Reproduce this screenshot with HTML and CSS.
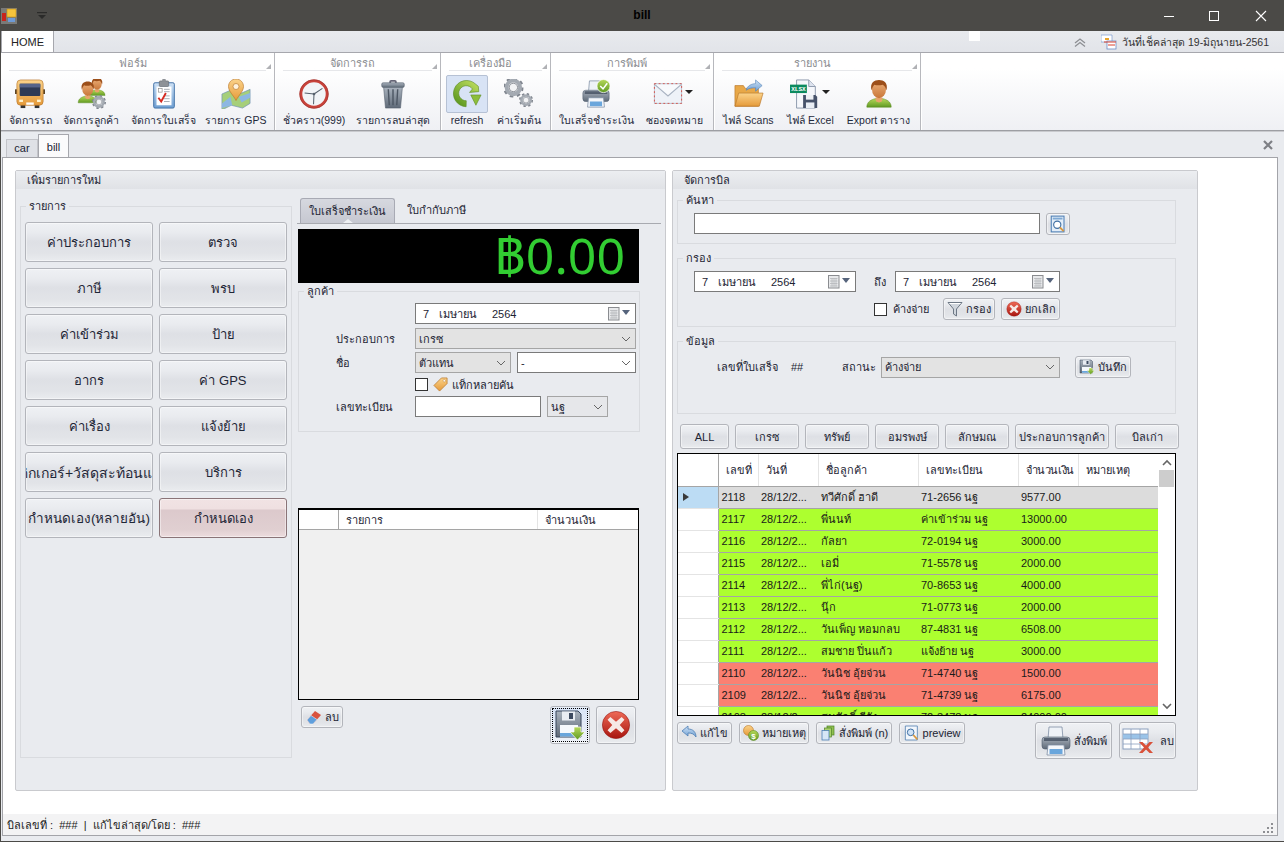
FILE: index.html
```html
<!DOCTYPE html>
<html lang="th">
<head>
<meta charset="utf-8">
<title>bill</title>
<link rel="stylesheet" href="styles.css">
</head>
<body>
<svg class="defs" aria-hidden="true">
<defs>
<linearGradient id="gOrange" x1="0" y1="0" x2="0" y2="1"><stop offset="0" stop-color="#fbd38a"/><stop offset="1" stop-color="#e59a3a"/></linearGradient>
<linearGradient id="gGreen" x1="0" y1="0" x2="0" y2="1"><stop offset="0" stop-color="#b6d85a"/><stop offset="1" stop-color="#5f9a22"/></linearGradient>
<linearGradient id="gGray" x1="0" y1="0" x2="0" y2="1"><stop offset="0" stop-color="#a9b2bd"/><stop offset="1" stop-color="#5f6a78"/></linearGradient>
<linearGradient id="gRed" x1="0" y1="0" x2="0" y2="1"><stop offset="0" stop-color="#ee6a57"/><stop offset="1" stop-color="#a8150f"/></linearGradient>
<linearGradient id="gBlue" x1="0" y1="0" x2="0" y2="1"><stop offset="0" stop-color="#cfe2f6"/><stop offset="1" stop-color="#6f9fd2"/></linearGradient>
<linearGradient id="gSkin" x1="0" y1="0" x2="0" y2="1"><stop offset="0" stop-color="#eeb27c"/><stop offset="1" stop-color="#c9773a"/></linearGradient>
</defs>
<symbol id="i-person" viewBox="0 0 32 32">
  <path d="M3 30c0-6 5-8 9-9h8c4 1 9 3 9 9z" fill="url(#gGreen)" stroke="#5b8a22" stroke-width=".6"/>
  <path d="M12 20h8l-1 4-3 1-3-1z" fill="#e7a56b"/>
  <ellipse cx="16" cy="11" rx="7.500" ry="9.500" fill="url(#gSkin)"/>
  <path d="M8 12C6 4 11 1 16 1s10 3 8 11c-1-3-2-5-4-6-3 1-7 1-9 0-1 1-2 3-3 6z" fill="#9c4f1a"/>
</symbol>
<symbol id="i-gear" viewBox="0 0 32 32">
  <circle cx="16" cy="16" r="13" fill="none" stroke="#80868f" stroke-width="6" stroke-dasharray="5 5.210"/>
  <circle cx="16" cy="16" r="10.500" fill="none" stroke="#a4aab2" stroke-width="6"/>
  <circle cx="16" cy="16" r="6.500" fill="#f2f3f5" stroke="#6f757e" stroke-width="1.200"/>
</symbol>
<symbol id="i-printer" viewBox="0 0 32 32">
  <path d="M9 2h13l1 12H8z" fill="#eef2f7" stroke="#7d8da3" stroke-width=".8"/>
  <rect x="2" y="12" width="28" height="12" rx="3" fill="url(#gGray)" stroke="#4d5b6d" stroke-width=".6"/>
  <rect x="4" y="13" width="24" height="3" fill="#3f4b5c" opacity=".75"/>
  <path d="M8 20h16l1 10H7z" fill="#f4f7fb" stroke="#7d8da3" stroke-width=".8"/>
  <rect x="9.500" y="24" width="13" height="5" fill="#6aa6dc"/>
</symbol>
<symbol id="i-save" viewBox="0 0 32 32">
  <path d="M2 2h22l3 3v23H2z" fill="url(#gGray)" stroke="#36445a" stroke-width="1"/>
  <rect x="8" y="2.500" width="13" height="9" fill="#e9edf3"/>
  <rect x="15" y="4" width="4" height="6" fill="#3d4a60"/>
  <rect x="6" y="16" width="18" height="11.500" fill="#f5f8fc"/>
  <rect x="6" y="24" width="18" height="3.500" fill="#6aa6dc"/>
  <path d="M20 18h7v5h4l-7.500 8L16 23h4z" fill="url(#gGreen)" stroke="#fff" stroke-width=".7"/>
</symbol>
<symbol id="i-cancel" viewBox="0 0 32 32">
  <circle cx="16" cy="16" r="14.500" fill="url(#gRed)" stroke="#93100c" stroke-width=".6"/>
  <path d="M10 7.500l6 5 6-5 3 3-5 5.500 5 5.500-3 3-6-5-6 5-3-3 5-5.500-5-5.500z" fill="#f6e9e6"/>
</symbol>
<symbol id="i-search" viewBox="0 0 24 24">
  <rect x="3" y="1.500" width="17" height="21" fill="#e2edf8" stroke="#4d7fb5" stroke-width="1.400"/>
  <rect x="5" y="3.500" width="13" height="2.500" fill="#7fa9d4"/>
  <circle cx="11" cy="13" r="4.800" fill="#fff" stroke="#3f6fa3" stroke-width="1.500"/>
  <path d="M14.500 16.500l5 5" stroke="#d9973d" stroke-width="2.600"/>
</symbol>
<symbol id="i-cal" viewBox="0 0 12 14">
  <rect x=".5" y=".5" width="10.500" height="12.500" fill="#e8e9eb" stroke="#8a8c90"/>
  <path d="M2 3.500h7.500M2 6h7.500M2 8.500h7.500M2 11h7.500M4 3v8.500M6 3v8.500M8 3v8.500" stroke="#b5b7bb" stroke-width=".8"/>
</symbol>
<symbol id="i-preview" viewBox="0 0 24 24">
  <path d="M2 1.500h18v21H2z" fill="#f2f6fb" stroke="#5c86b5" stroke-width="1.300"/>
  <circle cx="10" cy="11" r="5" fill="#cfe2f6" stroke="#3f6fa3" stroke-width="1.500"/>
  <path d="M14 15l6 6.500" stroke="#d9973d" stroke-width="2.600"/>
</symbol>
</svg>

<div class="window">
  <header class="titlebar">
    <svg class="appicon" viewBox="0 0 16 16"><rect x="0" y="0" width="16" height="16" fill="#7a7a78"/><rect x="6" y="1" width="9" height="8" fill="#f5c33b" stroke="#c48f14" stroke-width=".6"/><rect x="1" y="5" width="4" height="8" fill="#c8231c"/><rect x="7" y="10" width="7" height="4" fill="#6d9ad6"/></svg>
    <svg class="qat" viewBox="0 0 10 7"><rect x="0" y="0" width="10" height="1.200" fill="#2b2b2a"/><path d="M1 3h8L5 7z" fill="#2b2b2a"/></svg>
    <div class="title-text">bill</div>
    <div class="winbtns">
      <svg viewBox="0 0 12 12"><path d="M1 6.500h10" stroke="#fff" stroke-width="1"/></svg>
      <svg viewBox="0 0 12 12"><rect x="1.500" y="1.500" width="9" height="9" fill="none" stroke="#fff"/></svg>
      <svg viewBox="0 0 12 12"><path d="M1 1l10 10M11 1L1 11" stroke="#fff" stroke-width="1.100"/></svg>
    </div>
  </header>

  <div class="rtabs">
    <div class="rtab">HOME</div>
    <div class="speck"></div>
    <div class="rtabs-right">
      <svg class="chev" viewBox="0 0 14 10"><path d="M2 6l5-4 5 4M2 9.500l5-4 5 4" fill="none" stroke="#8d8f93" stroke-width="1.300"/></svg>
      <svg class="chkicon" viewBox="0 0 16 16"><path d="M0 1h11v7H0z" fill="#fff" stroke="#7d9bcf" stroke-width=".7"/><rect x="4" y="4" width="4" height="2" fill="#e9a52c"/><rect x="6" y="7" width="9" height="8" fill="#fff" stroke="#6d8cc5" stroke-width=".8"/><path d="M3 8h12M7 11h7" stroke="#d9402f" stroke-width="1"/></svg>
      <span>วันที่เช็คล่าสุด 19-มิถุนายน-2561</span>
    </div>
  </div>

  <nav class="ribbon">
    <section class="rgroup g1">
      <div class="rg-title">ฟอร์ม</div>
      <div class="rg-items">
        <div class="ritem w56"><div class="ricon"><svg viewBox="0 0 32 32"><rect x="0" y="11" width="2.500" height="5" fill="#5a4526"/><rect x="29.500" y="11" width="2.500" height="5" fill="#5a4526"/><rect x="6" y="27" width="5" height="4" fill="#333"/><rect x="21" y="27" width="5" height="4" fill="#333"/><rect x="2" y="1" width="28" height="27" rx="4" fill="url(#gOrange)" stroke="#b9772a" stroke-width=".7"/><rect x="5" y="5" width="22" height="13" rx="1" fill="#2d3a55"/><rect x="5" y="5" width="22" height="4" fill="#55648a"/><rect x="4.500" y="22" width="4" height="2.500" fill="#fff4d0"/><rect x="23.500" y="22" width="4" height="2.500" fill="#fff4d0"/><rect x="12" y="25" width="8" height="2.500" fill="#fff"/></svg></div><span>จัดการรถ</span></div>
        <div class="ritem w66"><div class="ricon"><svg viewBox="0 0 32 32"><g transform="translate(12 -2)"><svg width="21" height="21" viewBox="0 0 32 32"><use href="#i-person"/></svg></g><g transform="translate(0 2)"><svg width="25" height="25" viewBox="0 0 32 32"><use href="#i-person"/></svg></g><g transform="translate(17 17)"><svg width="15" height="15" viewBox="0 0 32 32"><use href="#i-gear"/></svg></g></svg></div><span>จัดการลูกค้า</span></div>
        <div class="ritem w79"><div class="ricon"><svg viewBox="0 0 32 32"><rect x="5" y="4" width="22" height="27" rx="1.500" fill="url(#gBlue)" stroke="#3d6ea5"/><rect x="8" y="8" width="16" height="20" fill="#fff"/><rect x="11" y="2" width="10" height="6" rx="1" fill="#8e9297" stroke="#5d6065" stroke-width=".6"/><rect x="14" y="0" width="4" height="3" rx="1" fill="#8e9297"/><rect x="10" y="10" width="4" height="4" fill="none" stroke="#8a8a8a" stroke-width=".7"/><path d="M16 11h6M16 13.500h6M16 18h6M16 21h6M16 24h6" stroke="#9aa0a8" stroke-width=".9"/><path d="M10 20l3 4 5-9" fill="none" stroke="#d62a20" stroke-width="2"/></svg></div><span>จัดการใบเสร็จ</span></div>
        <div class="ritem w66"><div class="ricon"><svg viewBox="0 0 32 32"><path d="M1 16l9-4 12 3 9-4v15l-8 5-12-3-10 5z" fill="#a6cf7a" stroke="#6f8fb5" stroke-width=".7"/><path d="M1 26l9-7 2 9-11 3zM19 19l12-4v5l-9 5z" fill="#8db7e2"/><path d="M16 0c-5 0-8 4-8 8 0 5 5 9 8 15 3-6 8-10 8-15 0-4-3-8-8-8z" fill="url(#gOrange)" stroke="#b9772a" stroke-width=".7"/><circle cx="16" cy="8" r="3.200" fill="#fff3dd" stroke="#b9772a" stroke-width=".7"/></svg></div><span>รายการ GPS</span></div>
      </div>
    </section>
    <section class="rgroup g2">
      <div class="rg-title">จัดการรถ</div>
      <div class="rg-items">
        <div class="ritem w76"><div class="ricon"><svg viewBox="0 0 32 32"><circle cx="16" cy="16" r="14" fill="#f2f4f7" stroke="#c8423a" stroke-width="3"/><circle cx="16" cy="16" r="15.300" fill="none" stroke="#96302c" stroke-width=".6"/><path d="M16 16l9-6M16 16l-.5 11M16 16l-10-1" stroke="#56606c" stroke-width="1.100" fill="none"/><circle cx="16" cy="16" r="1.400" fill="#56606c"/></svg></div><span>ชั่วคราว(999)</span></div>
        <div class="ritem w82"><div class="ricon"><svg viewBox="0 0 32 32"><path d="M12 3q0-2 2-2h4q2 0 2 2v2h-2V3h-4v2h-2z" fill="#667"/><rect x="4" y="4" width="24" height="5" rx="1.500" fill="url(#gGray)" stroke="#515b69" stroke-width=".6"/><path d="M6 9h20l-2 22H8z" fill="url(#gGray)" stroke="#515b69" stroke-width=".6"/><path d="M11 11l1 17M16 11v17M21 11l-1 17" stroke="#4c5663" stroke-width="1.500"/></svg></div><span>รายการลบล่าสุด</span></div>
      </div>
    </section>
    <section class="rgroup g3">
      <div class="rg-title">เครื่องมือ</div>
      <div class="rg-items">
        <div class="ritem w50 active"><div class="ricon"><svg viewBox="0 0 32 32"><path d="M16 2a14 14 0 1 0 8 25l-4-5a8 8 0 1 1-3-13.800V13l7-7-4-4z" fill="url(#gGreen)" stroke="#5b8a22" stroke-width=".6" transform="rotate(40 16 16)"/><path d="M20 17h11l-5.500 11z" fill="#8cbe3c" stroke="#5b8a22" stroke-width=".6"/></svg></div><span>refresh</span></div>
        <div class="ritem w54"><div class="ricon"><svg viewBox="0 0 32 32"><g transform="translate(-1 -2)"><svg width="22" height="22" viewBox="0 0 32 32"><use href="#i-gear"/></svg></g><g transform="translate(16 15)"><svg width="15" height="15" viewBox="0 0 32 32"><use href="#i-gear"/></svg></g></svg></div><span>ค่าเริ่มต้น</span></div>
      </div>
    </section>
    <section class="rgroup g4">
      <div class="rg-title">การพิมพ์</div>
      <div class="rg-items">
        <div class="ritem w88"><div class="ricon"><svg viewBox="0 0 32 32"><use href="#i-printer"/><circle cx="24" cy="7.500" r="7" fill="url(#gGreen)" stroke="#fff" stroke-width=".8"/><path d="M20.500 7.500l3 3 4.500-6" fill="none" stroke="#fff" stroke-width="1.600"/></svg></div><span>ใบเสร็จชำระเงิน</span></div>
        <div class="ritem w68"><div class="ricon withcaret"><svg viewBox="0 0 32 32"><rect x="1.500" y="5" width="29" height="21" fill="#eef2f8" stroke="#b9c2d0"/><rect x="1.500" y="5" width="29" height="21" fill="none" stroke="#d8453b" stroke-width=".9" stroke-dasharray="2 2.500"/><path d="M2 6l14 12L30 6z" fill="#f8fafd"/><path d="M2 6l14 12L30 6" fill="none" stroke="#a9b3c2" stroke-width="1.300"/></svg><i class="caret"></i></div><span>ซองจดหมาย</span></div>
      </div>
    </section>
    <section class="rgroup g5">
      <div class="rg-title">รายงาน</div>
      <div class="rg-items">
        <div class="ritem w67"><div class="ricon"><svg viewBox="0 0 32 32"><path d="M1 7h9l2 3h14v19H1z" fill="#e8a848" stroke="#b9772a" stroke-width=".7"/><path d="M5 15h26l-4 14H1z" fill="url(#gOrange)" stroke="#b9772a" stroke-width=".7"/><path d="M13 12c1-5 6-7 10-7V1l7 6-7 6V9c-4 0-7 1-10 3z" fill="url(#gBlue)" stroke="#4d7fb5" stroke-width=".6"/></svg></div><span>ไฟล์ Scans</span></div>
        <div class="ritem w57"><div class="ricon withcaret"><svg viewBox="0 0 32 32"><path d="M7 1h13l7 7v23H7z" fill="#f5f7fb" stroke="#8b97ab"/><path d="M20 1v7h7" fill="#dde3ee" stroke="#8b97ab"/><rect x="0" y="6" width="18" height="9" fill="#0b8a5f"/><text x="9" y="13.200" class="xl">XLSX</text><path d="M14 17h13l2 2v12H14z" fill="#46526a"/><rect x="17" y="17" width="8" height="5" fill="#eef1f5"/><rect x="17" y="25" width="9" height="6" fill="#e9eef5"/></svg><i class="caret"></i></div><span>ไฟล์ Excel</span></div>
        <div class="ritem w79"><div class="ricon"><svg viewBox="0 0 32 32"><use href="#i-person"/></svg></div><span>Export ตาราง</span></div>
      </div>
    </section>
  </nav>

  <div class="doctabs">
    <div class="dtab">car</div>
    <div class="dtab on">bill</div>
    <svg class="dclose" viewBox="0 0 10 10"><path d="M1 1l8 8M9 1L1 9" stroke="#7d7f84" stroke-width="2.200"/></svg>
  </div>

  <main class="doc">
    <div class="workspace">
      <section class="panel pleft">
        <div class="phead"><span>เพิ่มรายการใหม่</span></div>
        <div class="lbody">
          <div class="group items">
            <div class="gtitle">รายการ</div>
            <div class="bigbtns">
              <button class="btn big">ค่าประกอบการ</button>
              <button class="btn big">ตรวจ</button>
              <button class="btn big">ภาษี</button>
              <button class="btn big">พรบ</button>
              <button class="btn big">ค่าเข้าร่วม</button>
              <button class="btn big">ป้าย</button>
              <button class="btn big">อากร</button>
              <button class="btn big">ค่า GPS</button>
              <button class="btn big">ค่าเรื่อง</button>
              <button class="btn big">แจ้งย้าย</button>
              <button class="btn big clip"><span>สติกเกอร์+วัสดุสะท้อนแสง</span></button>
              <button class="btn big">บริการ</button>
              <button class="btn big wider">กำหนดเอง(หลายอัน)</button>
              <button class="btn big pink">กำหนดเอง</button>
            </div>
          </div>
          <div class="midcol">
            <div class="ptabs">
              <div class="ptab on">ใบเสร็จชำระเงิน</div>
              <div class="ptab">ใบกำกับภาษี</div>
            </div>
            <div class="display">฿0.00</div>
            <div class="group cust">
              <div class="gtitle">ลูกค้า</div>
              <div class="form">
                <div class="frow r21"><label></label>
                  <div class="field date wide"><span class="d">7</span><span class="m">เมษายน</span><span class="y">2564</span><svg class="cal"><use href="#i-cal"/></svg><i class="tri"></i></div>
                </div>
                <div class="frow r21"><label>ประกอบการ</label>
                  <div class="field combo wide"><span>เกรซ</span><svg class="chv" viewBox="0 0 10 6"><path d="M1 1l4 4 4-4" fill="none" stroke="#666"/></svg></div>
                </div>
                <div class="frow r21"><label>ชื่อ</label>
                  <div class="field combo w96"><span>ตัวแทน</span><svg class="chv" viewBox="0 0 10 6"><path d="M1 1l4 4 4-4" fill="none" stroke="#666"/></svg></div>
                  <div class="field white w119 ml6"><span>-</span><svg class="chv" viewBox="0 0 10 6"><path d="M1 1l4 4 4-4" fill="none" stroke="#666"/></svg></div>
                </div>
                <div class="frow r17"><label></label>
                  <i class="check"></i>
                  <svg class="tag" viewBox="0 0 16 16"><path d="M1 9l8-8h6v6l-8 8z" fill="url(#gOrange)" stroke="#b9772a" stroke-width=".8"/><circle cx="12" cy="4" r="1.300" fill="#fff" stroke="#b9772a" stroke-width=".5"/></svg>
                  <span class="chk-lab">แท็กหลายคัน</span>
                </div>
                <div class="frow r21"><label>เลขทะเบียน</label>
                  <div class="field white w126"></div>
                  <div class="field combo light w61 ml6"><span>นฐ</span><svg class="chv" viewBox="0 0 10 6"><path d="M1 1l4 4 4-4" fill="none" stroke="#666"/></svg></div>
                </div>
              </div>
            </div>
            <div class="ltable">
              <div class="lt-head"><span class="c1"></span><span class="c2">รายการ</span><span class="c3">จำนวนเงิน</span></div>
            </div>
            <div class="lactions">
              <button class="btn small"><svg class="s16" viewBox="0 0 16 16"><path d="M1 11l8-9 6 4-8 9H4z" fill="#d9533f"/><path d="M1 11l4-4.500 6 4L7 15H4z" fill="#5f9fdc" stroke="#fff" stroke-width=".5"/></svg>ลบ</button>
              <span class="spacer"></span>
              <button class="btn act focus"><svg class="s32" viewBox="0 0 32 32"><use href="#i-save"/></svg></button>
              <button class="btn act"><svg class="s30" viewBox="0 0 32 32"><use href="#i-cancel"/></svg></button>
            </div>
          </div>
        </div>
      </section>

      <section class="panel pright">
        <div class="phead"><span>จัดการบิล</span></div>
        <div class="rbody">
          <div class="group g-search">
            <div class="gtitle">ค้นหา</div>
            <div class="srow">
              <div class="field white w346"></div>
              <button class="btn ico"><svg class="s18" viewBox="0 0 24 24"><use href="#i-search"/></svg></button>
            </div>
          </div>
          <div class="group g-filter">
            <div class="gtitle">กรอง</div>
            <div class="frow2">
              <div class="field date w162"><span class="d">7</span><span class="m">เมษายน</span><span class="y">2564</span><svg class="cal"><use href="#i-cal"/></svg><i class="tri"></i></div>
              <span class="to">ถึง</span>
              <div class="field date w165"><span class="d">7</span><span class="m">เมษายน</span><span class="y">2564</span><svg class="cal"><use href="#i-cal"/></svg><i class="tri"></i></div>
            </div>
            <div class="frow3">
              <i class="check"></i><span class="owed">ค้างจ่าย</span>
              <button class="btn small b-filter"><svg class="s16" viewBox="0 0 16 16"><path d="M1 1.500h14L9.500 8v7l-3-2V8z" fill="#cfd5dc" stroke="#6d7885"/><path d="M2.500 2.500h11" stroke="#fff"/></svg>กรอง</button>
              <button class="btn small b-cancel"><svg class="s16" viewBox="0 0 32 32"><use href="#i-cancel"/></svg>ยกเลิก</button>
            </div>
          </div>
          <div class="group g-info">
            <div class="gtitle">ข้อมูล</div>
            <div class="irow">
              <span class="no">เลขที่ใบเสร็จ</span><span class="hash">##</span><span class="st">สถานะ</span>
              <div class="field combo w179"><span>ค้างจ่าย</span><svg class="chv" viewBox="0 0 10 6"><path d="M1 1l4 4 4-4" fill="none" stroke="#666"/></svg></div>
              <button class="btn small b-save"><svg class="s16" viewBox="0 0 32 32"><use href="#i-save"/></svg>บันทึก</button>
            </div>
          </div>
          <div class="fbtns">
            <button class="btn fb w49">ALL</button>
            <button class="btn fb">เกรซ</button>
            <button class="btn fb">ทรัพย์</button>
            <button class="btn fb">อมรพงษ์</button>
            <button class="btn fb">ลักษมณ</button>
            <button class="btn fb w94">ประกอบการลูกค้า</button>
            <button class="btn fb">บิลเก่า</button>
          </div>
          <div class="rtable">
            <div class="rt-wrap">
              <table>
                <colgroup><col class="k0"><col class="k1"><col class="k2"><col class="k3"><col class="k3"><col class="k2"><col class="k4"></colgroup>
                <thead><tr><th></th><th>เลขที่</th><th>วันที่</th><th>ชื่อลูกค้า</th><th>เลขทะเบียน</th><th class="tight">จำนวนเงิน</th><th>หมายเหตุ</th></tr></thead>
                <tbody>
                  <tr class="gray"><th class="sel"><i class="arrow"></i></th><td>2118</td><td>28/12/2...</td><td>ทวีศักดิ์ ฮาดี</td><td>71-2656 นฐ</td><td>9577.00</td><td></td></tr>
                  <tr class="green"><th></th><td>2117</td><td>28/12/2...</td><td>พี่นนท์</td><td>ค่าเข้าร่วม นฐ</td><td>13000.00</td><td></td></tr>
                  <tr class="green"><th></th><td>2116</td><td>28/12/2...</td><td>กัลยา</td><td>72-0194 นฐ</td><td>3000.00</td><td></td></tr>
                  <tr class="green"><th></th><td>2115</td><td>28/12/2...</td><td>เอมี่</td><td>71-5578 นฐ</td><td>2000.00</td><td></td></tr>
                  <tr class="green"><th></th><td>2114</td><td>28/12/2...</td><td>พี่ไก่(นฐ)</td><td>70-8653 นฐ</td><td>4000.00</td><td></td></tr>
                  <tr class="green"><th></th><td>2113</td><td>28/12/2...</td><td>นุ๊ก</td><td>71-0773 นฐ</td><td>2000.00</td><td></td></tr>
                  <tr class="green"><th></th><td>2112</td><td>28/12/2...</td><td>วันเพ็ญ หอมกลบ</td><td>87-4831 นฐ</td><td>6508.00</td><td></td></tr>
                  <tr class="green"><th></th><td>2111</td><td>28/12/2...</td><td>สมชาย ปิ่นแก้ว</td><td>แจ้งย้าย นฐ</td><td>3000.00</td><td></td></tr>
                  <tr class="red"><th></th><td>2110</td><td>28/12/2...</td><td>วันนิช อุ้ยจ่วน</td><td>71-4740 นฐ</td><td>1500.00</td><td></td></tr>
                  <tr class="red"><th></th><td>2109</td><td>28/12/2...</td><td>วันนิช อุ้ยจ่วน</td><td>71-4739 นฐ</td><td>6175.00</td><td></td></tr>
                  <tr class="green"><th></th><td>2108</td><td>28/12/2...</td><td>สมศักดิ์ ดีจัง</td><td>72-3478 นฐ</td><td>24000.00</td><td></td></tr>
                </tbody>
              </table>
            </div>
            <div class="vscroll">
              <svg viewBox="0 0 10 8"><path d="M1 6l4-4 4 4" fill="none" stroke="#666" stroke-width="1.600"/></svg>
              <div class="thumb"></div>
              <span class="spacer"></span>
              <svg viewBox="0 0 10 8"><path d="M1 2l4 4 4-4" fill="none" stroke="#666" stroke-width="1.600"/></svg>
            </div>
          </div>
          <div class="bactions">
            <button class="btn small w55"><svg class="s16" viewBox="0 0 16 16"><path d="M1 6l6-5v3c5 0 8 3 8 8-2-3-4-4-8-4v3z" fill="url(#gBlue)" stroke="#4d7fb5" stroke-width=".8"/></svg>แก้ไข</button>
            <button class="btn small w70b"><svg class="s16" viewBox="0 0 16 16"><circle cx="5.500" cy="5.500" r="5" fill="url(#gOrange)" stroke="#b9772a" stroke-width=".6"/><circle cx="10.500" cy="10.500" r="5" fill="url(#gGreen)" stroke="#5b8a22" stroke-width=".6"/><text x="10.500" y="13.500" class="cur">$</text></svg>หมายเหตุ</button>
            <button class="btn small w76b"><svg class="s16" viewBox="0 0 16 16"><rect x="7" y="1" width="7" height="9" fill="#8fc050" stroke="#4f8127" stroke-width=".7"/><rect x="4.500" y="3" width="7" height="9" fill="#a9d26a" stroke="#4f8127" stroke-width=".7"/><rect x="2" y="5.500" width="7" height="9.500" fill="#d6e7f7" stroke="#4d7fb5" stroke-width=".8"/></svg>สั่งพิมพ์ (n)</button>
            <button class="btn small w66b"><svg class="s16" viewBox="0 0 24 24"><use href="#i-preview"/></svg>preview</button>
            <span class="spacer"></span>
            <button class="btn tall w77"><svg class="s32" viewBox="0 0 32 32"><use href="#i-printer"/></svg>สั่งพิมพ์</button>
            <button class="btn tall w57b"><svg class="s32" viewBox="0 0 32 32"><rect x="1" y="4" width="25" height="20" fill="#fff" stroke="#8ba0be"/><rect x="1" y="9" width="25" height="5" fill="#9ac3e8"/><path d="M1 9h25M1 14h25M1 19h25M9 4v20M18 4v20" stroke="#8ba0be" stroke-width=".8"/><path d="M17 17h3.500l3.500 3.500 3.500-3.500H31l-5 5.500 5 5.500h-3.500L24 24.500 20.500 28H17l5-5.500z" fill="#d9513a"/></svg><span class="lb">ลบ</span></button>
          </div>
        </div>
      </section>
    </div>
    <footer class="status">
      <span>บิลเลขที่ :&nbsp; ###&nbsp; |&nbsp; แก้ไขล่าสุด/โดย :&nbsp; ###</span>
      <svg class="grip" viewBox="0 0 11 11"><path d="M8 0h2v2H8zM4 4h2v2H4zM8 4h2v2H8zM0 8h2v2H0zM4 8h2v2H4zM8 8h2v2H8z" fill="#8e8f93"/></svg>
    </footer>
  </main>
</div>
</body>
</html>
```

FILE: styles.css
```css
* { box-sizing: border-box; }
html, body { margin: 0; padding: 0; }
body {
  width: 1284px; height: 842px; overflow: hidden;
  font: 11px/14px "Liberation Sans", "Noto Sans", sans-serif;
  color: #1c2433; background: #e9ebef;
}
.defs { position: absolute; width: 0; height: 0; }
.window {
  display: flex; flex-direction: column; height: 842px;
  border-left: 1px solid #4b4a47; border-bottom: 1px solid #4b4a47;
}
button { font: inherit; color: inherit; padding: 0; cursor: default; }
.spacer { flex: 1; }

/* title bar */
.titlebar { flex: none; height: 31px; margin-left: -1px; background: #4b4a47; display: flex; align-items: center; }
.appicon { width: 16px; height: 16px; margin-left: 1px; }
.qat { width: 10px; height: 7px; margin-left: 20px; }
.title-text { flex: 1; text-align: center; font-weight: 700; font-size: 12px; color: #000; padding-left: 90px; padding-bottom: 1px; }
.winbtns { display: flex; }
.winbtns svg { width: 12px; height: 12px; margin: 0 17px 0 16px; }
.winbtns svg:last-child { margin-right: 17px; margin-left: 18px; }

/* ribbon tabs */
.rtabs { flex: none; height: 21px; display: flex; align-items: stretch; background: linear-gradient(#e8eaee, #e2e4e9); position: relative; }
.rtab { width: 53px; background: #fff; border: 1px solid #a6a7ad; border-bottom: 0; border-top: 0; display: flex; align-items: center; justify-content: center; color: #222; }
.speck { position: absolute; left: 968px; top: 0; width: 11px; height: 10px; background: #fff; }
.rtabs-right { margin-left: auto; display: flex; align-items: center; padding-right: 15px; color: #333; font-size: 10.5px; }
.chev { width: 14px; height: 10px; margin-right: 14px; }
.chkicon { width: 16px; height: 16px; margin-right: 5px; }

/* ribbon */
.ribbon { flex: none; height: 79px; display: flex; border-top: 1px solid #a6a7ad; border-bottom: 1px solid #9d9ea3; background: linear-gradient(#fff 20%, #eff0f4); box-shadow: 0 1px 0 #c9cace; position: relative; }
.rgroup { position: relative; border-right: 1px solid #b7b8bd; box-shadow: 1px 0 0 #fff; display: flex; flex-direction: column; }
.rgroup::after { content: ""; position: absolute; right: 3px; top: 11px; width: 0; height: 0; border-left: 5px solid transparent; border-bottom: 5px solid #b0b1b5; }
.g1 { width: 274px; } .g2 { width: 166px; } .g3 { width: 110px; } .g4 { width: 163px; } .g5 { width: 207px; }
.rg-title { margin: 3px 8px 0; padding-right: 10px; height: 15px; border-bottom: 1px solid #e6e7ea; text-align: center; color: #8a8c90; }
.rg-items { display: flex; margin-top: 4px; padding-left: 1px; }
.ritem { display: flex; flex-direction: column; align-items: center; flex: none; white-space: nowrap; color: #1f2a3c; font-size: 10.5px; }
.ricon { height: 38px; width: 42px; display: flex; align-items: center; justify-content: center; position: relative; flex: none; }
.ricon > svg { width: 30px; height: 30px; }
.withcaret { padding-right: 12px; }
.active .ricon { background: #d8e3f5; border: 1px solid #b6c1d4; border-radius: 2px; }
.caret { position: absolute; right: 2px; top: 15px; width: 0; height: 0; border: 4px solid transparent; border-top: 4px solid #222; border-bottom: 0; }
.xl { font: 700 6.5px "Liberation Mono", monospace; fill: #fff; text-anchor: middle; }
.cur { font: 700 8px "Liberation Sans", sans-serif; fill: #fff; text-anchor: middle; }
.w56 { width: 56px; } .w66 { width: 66px; } .w79 { width: 79px; } .w76 { width: 76px; } .w82 { width: 82px; }
.w50 { width: 50px; } .w54 { width: 54px; } .w88 { width: 88px; } .w68 { width: 68px; } .w67 { width: 67px; } .w57 { width: 57px; }

/* document tabs */
.doctabs { flex: none; height: 26px; padding-left: 5px; display: flex; align-items: flex-end; }
.dtab { height: 18px; width: 32px; background: #dfe1e6; border: 1px solid #c3c4c9; border-bottom: 0; text-align: center; line-height: 17px; }
.dtab.on { height: 23px; width: 31px; background: #fbfbfc; border-color: #a6a7ad; line-height: 25px; }
.dclose { width: 10px; height: 10px; margin-left: auto; margin-right: 11px; margin-bottom: 7px; }

/* document */
.doc { flex: none; height: 679px; width: 1276px; margin-left: 1px; border: 1px solid #a3a4a9; display: flex; flex-direction: column; background: #fff; }
.workspace { flex: none; height: 656px; padding: 12px 0 0 12px; display: flex; gap: 6px; align-items: flex-start; }
.status { flex: none; height: 21px; background: #f3f3f4; display: flex; align-items: center; justify-content: space-between; padding: 0 3px 0 4px; color: #222; }
.grip { width: 11px; height: 11px; margin-top: 7px; }

/* panels */
.panel { flex: none; height: 621px; background: #e9ebef; border: 1px solid #c9cace; border-radius: 2px; }
.pleft { width: 651px; }
.pright { width: 526px; }
.phead { height: 18px; background: linear-gradient(#eceef1, #e0e2e6); padding-left: 11px; line-height: 18px; }
.lbody { display: flex; padding-left: 4px; gap: 5px; }

/* group boxes */
.group { border: 1px solid #d9dbdf; }
.gtitle { width: fit-content; margin: -8px 0 0 5px; padding: 0 3px; background: #e9ebef; line-height: 14px; height: 14px; color: #1c2433; }
.items { width: 272px; height: 552px; margin-top: 17px; }
.bigbtns { display: grid; grid-template-columns: 128px 128px; grid-auto-rows: 40px; gap: 6px; padding: 9px 0 0 4px; }

/* buttons */
.btn {
  border: 1px solid #b3b5bb; border-radius: 3px;
  background: linear-gradient(#eff1f4 0%, #e9ebef 25%, #dee0e5 50%, #e2e4e8 80%, #eaecef 100%);
  box-shadow: inset 0 0 0 1px rgba(255,255,255,.45);
  display: flex; align-items: center; justify-content: center; white-space: nowrap;
}
.big { font-size: 13px; color: #1e2636; overflow: hidden; padding-top: 2px; }
.wider { font-size: 13.5px; }
.clip { font-size: 14px; }
.clip span { flex: none; width: 126px; display: flex; justify-content: center; }
.pink { background: linear-gradient(#f1e3e4 0%, #efe0e1 25%, #dcc9cc 30%, #e0cfd1 80%, #eddcde 100%); border-color: #8a7478; }

/* middle column */
.midcol { width: 364px; margin-top: 9px; display: flex; flex-direction: column; }
.ptabs { height: 26px; display: flex; border-bottom: 1px solid #a8aab0; padding-left: 3px; }
.ptab { height: 25px; text-align: center; line-height: 25px; width: 82px; }
.ptab.on { width: 95px; background: linear-gradient(#d6d8df, #c6c8d1); border: 1px solid #a8aab4; border-bottom: 0; border-radius: 3px 3px 0 0; line-height: 24px; position: relative; }
.ptab.on::after { content: ""; position: absolute; left: 42px; bottom: 0; width: 0; height: 0; border: 5px solid transparent; border-bottom: 4px solid #eef0f3; border-top: 0; }
.display { margin: 5px 0 0 1px; width: 341px; height: 54px; background: #000; color: #32cd32; font: 50px/52px "Noto Sans", sans-serif; text-align: right; padding-right: 14px; }
.cust { width: 342px; height: 141px; margin: 8px 0 0 1px; }
.form { margin-top: 5px; display: flex; flex-direction: column; gap: 3px; }
.frow { display: flex; align-items: center; padding-left: 37px; }
.frow label { width: 79px; flex: none; }
.r21 { height: 21px; }
.r21:first-child { margin-bottom: 1px; }
.r17 { height: 17px; }
.tag { width: 15px; height: 15px; margin-left: 5px; }
.chk-lab { margin-left: 4px; }

.field { height: 21px; border: 1px solid #7a7a7a; background: #fff; display: flex; align-items: center; padding-left: 3px; flex: none; position: relative; }
.field .chv { width: 10px; height: 6px; margin-left: auto; margin-right: 4px; }
.combo { background: #e3e3e3; border-color: #a5a5a5; }
.combo.light { background: #e6e7ea; }
.wide { width: 221px; } .w96 { width: 96px; } .w119 { width: 119px; } .w126 { width: 126px; } .w61 { width: 61px; }
.ml6 { margin-left: 6px; }
.date { padding-left: 7px; }
.date .d { width: 16px; } .date .m { width: 53px; }
.cal { width: 12px; height: 14px; margin-left: auto; }
.tri { width: 0; height: 0; border: 4px solid transparent; border-top: 5px solid #56647c; border-bottom: 0; margin: 0 5px 2px 2px; }
.check { width: 13px; height: 13px; flex: none; border: 1px solid #333; background: #fff; display: block; }

.ltable { width: 341px; height: 192px; margin: 76px 0 0 1px; border: 1px solid #000; border-top-width: 2px; background: #f0f0f0; }
.lt-head { height: 20px; background: #fff; border-bottom: 1px solid #a5a5a5; display: flex; align-items: center; }
.lt-head span { height: 100%; line-height: 20px; }
.lt-head .c1 { width: 40px; border-right: 1px solid #a5a5a5; flex: none; }
.lt-head .c2 { width: 199px; padding-left: 7px; border-right: 1px solid #e4e4e4; flex: none; }
.lt-head .c3 { padding-left: 7px; }
.lactions { display: flex; width: 338px; margin: 6px 0 0 1px; padding-left: 3px; gap: 6px; align-items: flex-start; }
.small { height: 22px; gap: 3px; padding: 0 3px; flex: none; }
.lactions .small { width: 42px; }
.act { width: 40px; height: 38px; flex: none; position: relative; }
.focus { background: linear-gradient(#d7e3f6, #eff2f8); outline: 1px dotted #000; outline-offset: -3px; }
.s16 { width: 16px; height: 16px; flex: none; }
.s18 { width: 18px; height: 18px; }
.s30 { width: 30px; height: 30px; }
.s32 { width: 32px; height: 32px; flex: none; }

/* right panel */
.rbody { padding: 11px 0 0 4px; display: flex; flex-direction: column; }
.g-search { width: 499px; height: 44px; }
.srow { display: flex; align-items: center; gap: 6px; padding: 5px 0 0 16px; height: 28px; }
.w346 { width: 346px; }
.ico { width: 24px; height: 22px; flex: none; }
.g-filter { width: 499px; height: 69px; margin-top: 14px; }
.frow2 { display: flex; align-items: center; padding: 6px 0 0 16px; }
.w162 { width: 162px; } .w165 { width: 165px; }
.to { width: 39px; padding-left: 18px; flex: none; }
.frow3 { display: flex; align-items: center; padding: 6px 0 0 196px; }
.owed { margin-left: 6px; width: 50px; flex: none; }
.b-filter { width: 52px; }
.b-cancel { width: 59px; margin-left: 6px; }
.g-info { width: 499px; height: 73px; margin-top: 14px; }
.irow { display: flex; align-items: center; height: 22px; margin-top: 8px; padding-left: 39px; }
.no { width: 74px; } .hash { width: 51px; } .st { width: 39px; }
.w179 { width: 179px; }
.b-save { width: 56px; margin-left: 15px; }
.fbtns { display: flex; gap: 6px; margin: 10px 0 0 3px; }
.fb { width: 64px; height: 25px; flex: none; }
.w49 { width: 49px; } .w94 { width: 94px; }
.rtable { width: 499px; height: 263px; margin-top: 4px; border: 1px solid #000; display: flex; background: #fff; }
.rt-wrap { width: 480px; overflow: hidden; }
table { border-collapse: collapse; table-layout: fixed; width: 480px; }
.k0 { width: 40px; } .k1 { width: 40px; } .k2 { width: 60px; } .k3 { width: 100px; } .k4 { width: 80px; }
thead th { height: 32px; font-weight: 400; text-align: left; padding: 0 0 0 7px; border-right: 1px solid #e4e4e4; border-bottom: 1px solid #a5a5a5; background: #fff; white-space: nowrap; }
thead th:first-child { border-right: 1px solid #a5a5a5; }
thead th.tight { letter-spacing: -.4px; }
tbody tr { height: 22px; }
tbody th { font-weight: 400; background: #fff; border-right: 1px solid #a5a5a5; border-bottom: 1px solid #e4e4e4; padding: 0; }
tbody th.sel { background: #bcdcf4; }
td { padding: 0 0 0 3px; border-bottom: 1px solid #a5a5a5; white-space: nowrap; overflow: hidden; color: #1a1a1a; }
.gray td { background: #dcdcdc; }
.green td { background: #adff2f; }
.red td { background: #fa8072; }
.arrow { display: block; width: 0; height: 0; border: 4px solid transparent; border-left: 6px solid #3a3a3a; border-right: 0; margin-left: 5px; }
.vscroll { width: 17px; flex: none; display: flex; flex-direction: column; align-items: center; background: #fff; padding: 5px 0; }
.vscroll svg { width: 10px; height: 8px; flex: none; }
.thumb { width: 15px; height: 17px; background: #cdcdcd; margin-top: 3px; flex: none; }
.bactions { width: 499px; display: flex; gap: 7px; margin-top: 6px; align-items: flex-start; }
.w55 { width: 55px; } .w70b { width: 70px; } .w76b { width: 76px; } .w66b { width: 66px; }
.tall { height: 37px; flex: none; gap: 2px; }
.w77 { width: 77px; } .w57b { width: 57px; }
.lb { margin-left: 4px; }
```
